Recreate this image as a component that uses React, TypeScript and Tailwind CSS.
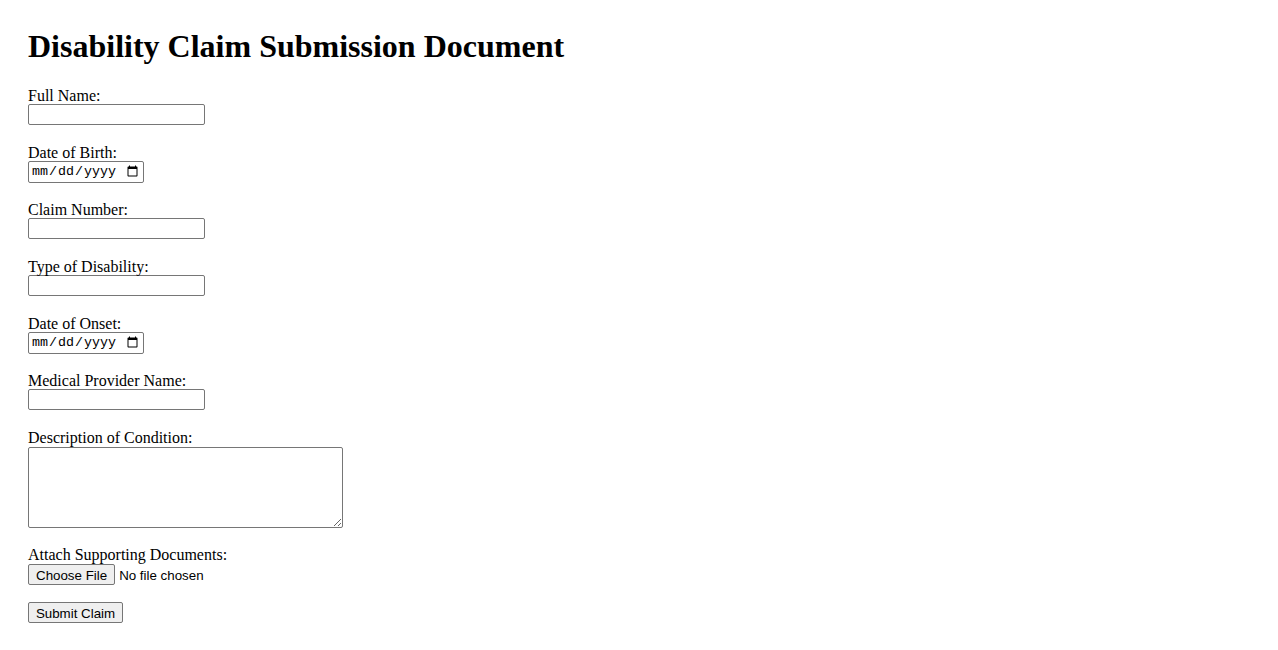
const fieldText =
  "block h-[21px] w-[177px] mt-[1px] bg-white border border-[#767676] rounded-[2px] px-[2px] py-[1px] text-[13.33px] font-['Liberation_Sans',Arial,sans-serif]";
const fieldDate =
  "block h-[22px] w-[116px] mt-[1px] bg-white border border-[#767676] rounded-[2px] px-[2px] py-[1px] text-[13.33px] font-['Liberation_Mono',monospace]";
const labelCls = "block h-[18px] leading-[21px]";

const Field = ({ label, type }: { label: string; type: "text" | "date" }) => (
  <div className={type === "date" ? "mb-[16px]" : "mb-[17px]"}>
    <label className={labelCls}>{label}</label>
    <input type={type} className={type === "date" ? fieldDate : fieldText} />
  </div>
);

export default function App() {
  return (
    <div className="min-h-[650px] bg-white text-black px-[28px] pt-[28px] font-['Liberation_Serif','Times_New_Roman',serif] text-[16px]">
      <h1 className="text-[32px] font-bold leading-[36px] mb-[21px]">Disability Claim Submission Document</h1>
      <form onSubmit={(e) => e.preventDefault()}>
        <Field label="Full Name:" type="text" />
        <Field label="Date of Birth:" type="date" />
        <Field label="Claim Number:" type="text" />
        <Field label="Type of Disability:" type="text" />
        <Field label="Date of Onset:" type="date" />
        <Field label="Medical Provider Name:" type="text" />

        <div className="mb-[18px]">
          <label className={labelCls}>Description of Condition:</label>
          <textarea className="block mt-[2px] h-[81px] w-[315px] bg-white border border-[#767676] rounded-[2px] px-[2px] py-[2px] text-[13.33px] font-['Liberation_Mono',monospace]" />
        </div>

        <div className="mb-[17px]">
          <label className="block h-[18px] leading-[17px]">Attach Supporting Documents:</label>
          <input
            type="file"
            className="block h-[21px] text-[13.33px] font-['Liberation_Sans',Arial,sans-serif] file:h-[21px] file:mr-[4px] file:bg-[#efefef] file:border file:border-[#767676] file:rounded-[2px] file:px-[7px] file:py-[1px] file:text-black"
          />
        </div>

        <button
          type="submit"
          className="block h-[21px] w-[95px] bg-[#efefef] border border-[#767676] rounded-[2px] px-[6px] py-[1px] text-[13.33px] font-['Liberation_Sans',Arial,sans-serif]"
        >
          Submit Claim
        </button>
      </form>
    </div>
  );
}
